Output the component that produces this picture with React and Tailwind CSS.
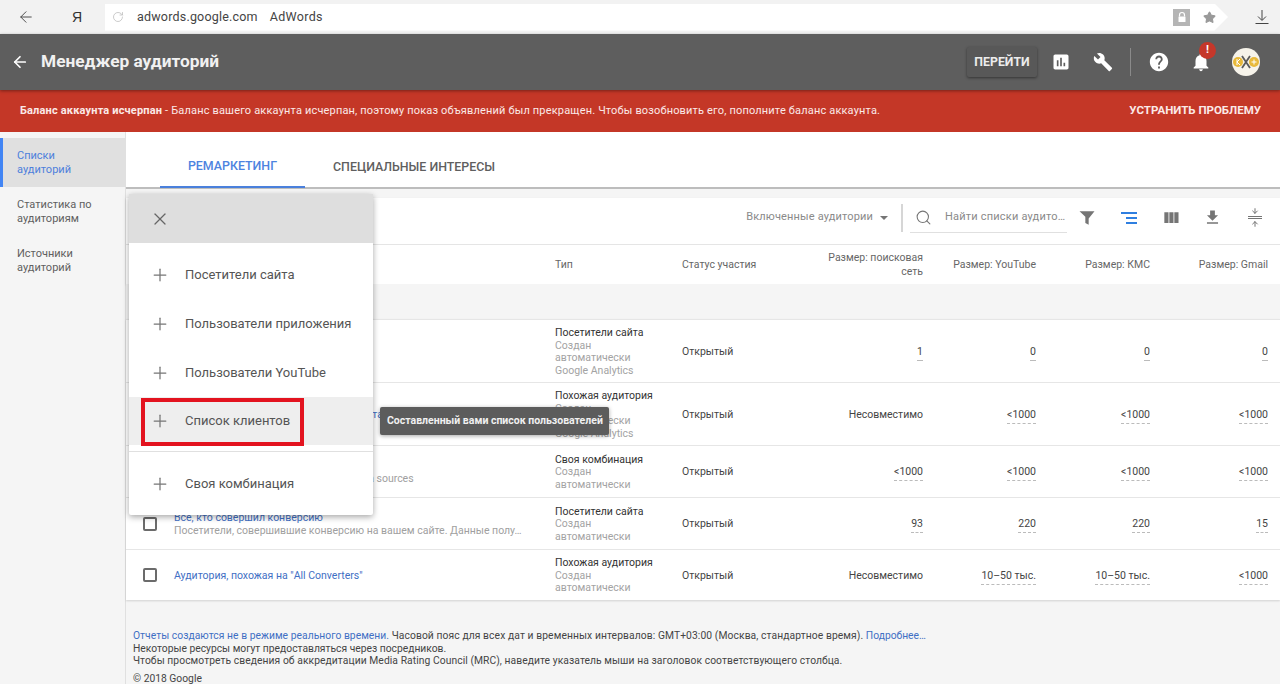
import { ArrowLeft, RotateCw, Star, Search, X, Plus, ArrowDown, ArrowUp } from 'lucide-react'

const P = {
  chart: 'M19 3H5c-1.1 0-2 .9-2 2v14c0 1.1.9 2 2 2h14c1.1 0 2-.9 2-2V5c0-1.1-.9-2-2-2zM9 17H7v-7h2v7zm4 0h-2V7h2v10zm4 0h-2v-4h2v4z',
  wrench: 'M22.7 19l-9.1-9.1c.9-2.3.4-5-1.5-6.9-2-2-5-2.4-7.4-1.3L9 6 6 9 1.6 4.7C.4 7.1.9 10.1 2.9 12.1c1.9 1.9 4.6 2.4 6.9 1.5l9.1 9.1c.4.4 1 .4 1.4 0l2.3-2.3c.5-.4.5-1.1.1-1.4z',
  help: 'M12 2C6.48 2 2 6.48 2 12s4.48 10 10 10 10-4.48 10-10S17.52 2 12 2zm1 17h-2v-2h2v2zm2.07-7.75l-.9.92C13.45 12.9 13 13.5 13 15h-2v-.5c0-1.1.45-2.1 1.17-2.83l1.24-1.26c.37-.36.59-.86.59-1.41 0-1.1-.9-2-2-2s-2 .9-2 2H8c0-2.21 1.79-4 4-4s4 1.79 4 4c0 .88-.36 1.68-.93 2.25z',
  bell: 'M12 22c1.1 0 2-.9 2-2h-4c0 1.1.89 2 2 2zm6-6v-5c0-3.07-1.64-5.64-4.5-6.32V4c0-.83-.67-1.5-1.5-1.5s-1.5.67-1.5 1.5v.68C7.63 5.36 6 7.92 6 11v5l-2 2v1h16v-1l-2-2z',
  filter: 'M3 4h18l-7 8.5V20l-4-2v-7.5z',
  columns: 'M10 18h5V5h-5v13zm-6 0h5V5H4v13zM16 5v13h5V5h-5z',
  download: 'M19 9h-4V3H9v6H5l7 7 7-7zM5 18v2h14v-2H5z',
}

function Mi({ d, className }) {
  return (
    <svg viewBox="0 0 24 24" className={className} fill="currentColor">
      <path d={d} />
    </svg>
  )
}

function Size({ v }) {
  if (v === 'Несовместимо') return <span>{v}</span>
  return <span className="border-b border-dashed border-[#bbb] pb-[2px]">{v}</span>
}

const rows = [
  { h: 'h-[63px]', name: 'Все посетители', desc: 'Посетители вашего сайта', type: 'Посетители сайта', sub: ['Создан', 'автоматически', 'Google Analytics'], sizes: ['1', '0', '0', '0'] },
  { h: 'h-[63px]', name: 'Аудитория, похожая на посетителей сайта и приложений', type: 'Похожая аудитория', sub: ['Создан', 'автоматически', 'Google Analytics'], sizes: ['Несовместимо', '<1000', '<1000', '<1000'] },
  { h: 'h-[52px]', name: 'Все пользователи', desc: 'Пользователи всех Google Analytics data sources', type: 'Своя комбинация', sub: ['Создан', 'автоматически'], sizes: ['<1000', '<1000', '<1000', '<1000'] },
  { h: 'h-[52px]', name: 'Все, кто совершил конверсию', desc: 'Посетители, совершившие конверсию на вашем сайте. Данные полу…', type: 'Посетители сайта', sub: ['Создан', 'автоматически'], sizes: ['93', '220', '220', '15'] },
  { h: 'h-[51px]', name: 'Аудитория, похожая на "All Converters"', type: 'Похожая аудитория', sub: ['Создан', 'автоматически'], sizes: ['Несовместимо', '10–50 тыс.', '10–50 тыс.', '<1000'] },
]

const cols = 'grid grid-cols-[48px_381px_127px_100px_141px_113px_114px_118px] pr-3'

const menu = [
  { label: 'Посетители сайта', h: 'h-[49px]' },
  { label: 'Пользователи приложения', h: 'h-[49px]' },
  { label: 'Пользователи YouTube', h: 'h-[49px]' },
]

function MenuItem({ label, h, className = '' }) {
  return (
    <div className={`flex items-center pl-[21px] ${h} ${className}`}>
      <Plus className="w-[20px] h-[20px] text-[#757575]" strokeWidth={1.5} />
      <span className="ml-[15px] text-[13px] text-[#555]">{label}</span>
    </div>
  )
}

export default function App() {
  return (
    <div className="relative w-[1280px] h-[684px] overflow-hidden bg-[#f5f5f5] font-['Roboto',sans-serif] text-[#212121]">
      {/* browser bar */}
      <div className="h-[34px] bg-[#f2f2f2] flex items-center">
        <ArrowLeft className="ml-[17px] w-[18px] h-[18px] text-[#444]" strokeWidth={1.25} />
        <span className="ml-[37px] w-[12px] text-[14px] text-[#333] font-['Liberation_Sans',sans-serif]">Я</span>
        <div className="ml-[21px] w-[1123px] h-[27px] bg-white flex items-center [clip-path:polygon(0_0,98.8%_0,100%_50%,98.8%_100%,0_100%)]">
          <RotateCw className="ml-[7px] w-[12px] h-[12px] text-[#bbb]" strokeWidth={1.5} />
          <span className="ml-[13px] text-[12.5px] text-[#444] tracking-[0.2px]">adwords.google.com</span>
          <span className="ml-[12px] text-[12.5px] text-[#444] tracking-[0.3px]">AdWords</span>
          <div className="ml-auto w-[17px] h-[17px] bg-[#b5b5b5] flex items-center justify-center">
            <svg viewBox="0 0 12 12" className="w-[12px] h-[12px]">
              <path d="M3.5 5.5V4a2.5 2.5 0 0 1 5 0v1.5" fill="none" stroke="#fff" strokeWidth="1.2" />
              <rect x="2.5" y="5.5" width="7" height="5.5" rx="0.5" fill="#fff" />
            </svg>
          </div>
          <Star className="ml-[13px] mr-[12px] w-[13px] h-[13px] text-[#9a9a9a]" fill="#9a9a9a" />
        </div>
        <svg viewBox="0 0 16 16" className="ml-[26px] w-[16px] h-[16px] text-[#444]" fill="none" stroke="currentColor" strokeWidth="1">
          <path d="M8 1v10M4 7.5L8 11.5l4-4M1.5 14.5h13" />
        </svg>
      </div>

      {/* app header */}
      <div className="h-[56px] bg-[#5e5e5e] flex items-center text-white shadow-[0_1px_3px_rgba(0,0,0,0.4)] relative">
        <ArrowLeft className="ml-[11px] w-[18px] h-[18px]" strokeWidth={2.25} />
        <span className="ml-[12px] text-[17.3px] font-bold text-[#f1f1f1]">Менеджер аудиторий</span>
        <div className="ml-auto mr-[14px] w-[70px] h-[30px] flex items-center justify-center bg-[#585858] rounded-[2px] shadow-[0_1px_3px_rgba(0,0,0,0.45)] text-[12.3px] font-bold text-[#ececec]">ПЕРЕЙТИ</div>
        <Mi d={P.chart} className="w-[20px] h-[20px] mr-[22px]" />
        <Mi d={P.wrench} className="w-[20px] h-[20px] mr-[17px]" />
        <div className="w-px h-[28px] bg-[#8a8a8a] mr-[17px]" />
        <Mi d={P.help} className="w-[22px] h-[22px] mr-[20px]" />
        <div className="relative w-[22px] h-[22px] mr-[20px]">
          <Mi d={P.bell} className="w-[22px] h-[22px]" />
          <div className="absolute -top-[9px] left-[9px] w-[17px] h-[17px] rounded-full bg-[#c5372a] text-[11px] font-bold flex items-center justify-center">!</div>
        </div>
        <svg viewBox="0 0 28 28" className="w-[28px] h-[28px] mr-[20px]">
          <circle cx="14" cy="14" r="14" fill="#f6f3ea" />
          <circle cx="6" cy="14" r="5" fill="#e8b93a" />
          <circle cx="22" cy="14" r="5" fill="#e8b93a" />
          <path d="M10 8l8 12M18 8l-8 12" stroke="#5a5a5a" strokeWidth="1.8" />
          <path d="M5 11v6M8 11l-3 3 3 3M22 11.5v5M19.5 14h5" stroke="#fff" strokeWidth="1" fill="none" />
        </svg>
      </div>

      {/* alert */}
      <div className="h-[42px] bg-[#c43727] flex items-center text-white text-[11px]">
        <span className="ml-[20px] text-[#fbe9e7] tracking-[0.17px]">
          <b>Баланс аккаунта исчерпан</b> - Баланс вашего аккаунта исчерпан, поэтому показ объявлений был прекращен. Чтобы возобновить его, пополните баланс аккаунта.
        </span>
        <span className="ml-auto mr-[19px] text-[11.5px] font-bold text-[#fbe9e7]">УСТРАНИТЬ ПРОБЛЕМУ</span>
      </div>

      <div className="flex h-[552px]">
        {/* sidebar */}
        <div className="w-[126px] shrink-0 pt-[6px] border-r border-[#e0e0e0] text-[11px] leading-[14px] text-[#5f5f5f]">
          <div className="h-[49px] bg-[#e0e0e0] border-l-[3px] border-[#4285f4] pl-[14px] flex items-center text-[#4d7fdc]">Списки<br />аудиторий</div>
          <div className="h-[49px] pl-[17px] flex items-center">Статистика по<br />аудиториям</div>
          <div className="h-[49px] pl-[17px] flex items-center">Источники<br />аудиторий</div>
        </div>

        <div className="flex-1 min-w-0">
          {/* tabs */}
          <div className="h-[57px] bg-white border-b-2 border-[#bdbdbd] flex pl-[34px] text-[12.4px] font-medium">
            <div className="w-[145px] h-[56px] border-b-2 border-[#4a80dc] text-[#4d83e0] flex items-center justify-center pt-[14px]">РЕМАРКЕТИНГ</div>
            <div className="ml-[28px] h-[56px] text-[#5f5f5f] flex items-center pt-[14px]">СПЕЦИАЛЬНЫЕ ИНТЕРЕСЫ</div>
          </div>

          {/* table card */}
          <div className="mt-[9px] bg-white shadow-[0_1px_2px_rgba(0,0,0,0.15)]">
            <div className="h-[47px] flex items-center justify-end border-b border-[#e5e5e5] text-[#8a8a8a] pb-[7px]">
              <span className="text-[11px] tracking-[0.15px]">Включенные аудитории</span>
              <div className="ml-[7px] w-0 h-0 border-x-[4px] border-x-transparent border-t-[4px] border-t-[#757575]" />
              <div className="ml-[13px] w-[2px] h-[28px] bg-[#d6d6d6]" />
              <div className="ml-[7px] w-[157px] h-[30px] border-b border-[#e0e0e0] flex items-center pl-[5px]">
                <Search className="w-[17px] h-[17px] text-[#757575]" strokeWidth={1.5} />
                <span className="ml-[13px] text-[11px] tracking-[0.2px] whitespace-nowrap">Найти списки аудито…</span>
              </div>
              <Mi d={P.filter} className="ml-[10px] w-[20px] h-[20px] text-[#757575]" />
              <div className="ml-[24px] w-[16px] flex flex-col items-end gap-[3px]">
                <div className="w-[16px] h-[2px] bg-[#2f7fe0]" />
                <div className="w-[11px] h-[2px] bg-[#2f7fe0]" />
                <div className="w-[11px] h-[2px] bg-[#2f7fe0]" />
              </div>
              <Mi d={P.columns} className="ml-[24px] w-[20px] h-[20px] text-[#757575]" />
              <Mi d={P.download} className="ml-[22px] w-[19px] h-[19px] text-[#757575]" />
              <div className="ml-[25px] mr-[18px] w-[15px] flex flex-col items-center text-[#757575]">
                <ArrowDown className="w-[8px] h-[8px]" strokeWidth={3} />
                <div className="w-[14px] h-px bg-[#757575] my-[1px]" />
                <div className="w-[14px] h-px bg-[#757575] mb-[1px]" />
                <ArrowUp className="w-[8px] h-[8px]" strokeWidth={3} />
              </div>
            </div>

            <div className={`${cols} h-[39px] items-center text-[10.5px] leading-[14px] text-[#666]`}>
              <div />
              <div />
              <div>Тип</div>
              <div>Статус участия</div>
              <div className="text-right pl-[40px]">Размер: поисковая сеть</div>
              <div className="text-right">Размер: YouTube</div>
              <div className="text-right">Размер: КМС</div>
              <div className="text-right">Размер: Gmail</div>
            </div>
          </div>

          <div className="h-[35px] bg-[#f5f5f5]" />

          <div className="bg-white shadow-[0_1px_2px_rgba(0,0,0,0.15)]">
            {rows.map((r) => (
              <div key={r.name} className={`${cols} ${r.h} items-center border-t border-[#e6e6e6] text-[10.5px] leading-[12.5px]`}>
                <div className="pl-[17px]">
                  <div className="w-[14px] h-[14px] border-2 border-[#6b6b6b] rounded-[2px]" />
                </div>
                <div className="min-w-0 whitespace-nowrap">
                  <div className="text-[#3f6fc4] leading-[13px]">{r.name}</div>
                  {r.desc && <div className="text-[#a0a0a0] leading-[13px]">{r.desc}</div>}
                </div>
                <div className="text-[#333] pt-[2px]">
                  {r.type}
                  {r.sub.map((s) => (
                    <div key={s} className="text-[#a3a3a3]">{s}</div>
                  ))}
                </div>
                <div className="text-[#444] pt-[2px]">Открытый</div>
                {r.sizes.map((s, i) => (
                  <div key={i} className="text-right text-[#444] pt-[2px]"><Size v={s} /></div>
                ))}
              </div>
            ))}
          </div>

          {/* footnote */}
          <div className="mt-[30px] pl-[7px] text-[10.3px] leading-[12.5px] text-[#444] whitespace-nowrap">
            <div><span className="text-[#3f6fc4] tracking-[0.04px]">Отчеты создаются не в режиме реального времени.</span> <span className="tracking-[0.09px]">Часовой пояс для всех дат и временных интервалов: GMT+03:00 (Москва, стандартное время).</span> <span className="text-[#3f6fc4]">Подробнее…</span></div>
            <div>Некоторые ресурсы могут предоставляться через посредников.</div>
            <div className="tracking-[0.07px]">Чтобы просмотреть сведения об аккредитации Media Rating Council (MRC), наведите указатель мыши на заголовок соответствующего столбца.</div>
            <div className="mt-[5px]">© 2018 Google</div>
          </div>
        </div>
      </div>

      {/* add-audience menu */}
      <div className="absolute left-[129px] top-[194px] w-[244px] h-[321px] bg-white rounded-[2px] shadow-[0_2px_6px_rgba(0,0,0,0.35)]">
        <div className="h-[49px] bg-[#dedede] flex items-center pl-[21px]">
          <X className="w-[20px] h-[20px] text-[#666]" strokeWidth={1.5} />
        </div>
        <div className="h-[7px]" />
        {menu.map((m) => (
          <MenuItem key={m.label} {...m} />
        ))}
        <MenuItem label="Список клиентов" h="h-[48px]" className="bg-[#eeeeee]" />
        <div className="h-[6px]" />
        <div className="border-t border-[#e0e0e0]" />
        <MenuItem label="Своя комбинация" h="h-[63px]" />
      </div>

      {/* highlight around the customer list item */}
      <div className="absolute left-[141px] top-[398px] w-[163px] h-[48px] border-[4px] border-[#e3131f]" />

      <div className="absolute left-[380px] top-[407px] w-[229px] h-[28px] bg-[#5c5c5c] rounded-[2px] shadow-[0_1px_4px_rgba(0,0,0,0.35)] flex items-center pl-[7px] text-[10.5px] font-bold text-[#f0f0f0] whitespace-nowrap">
        Составленный вами список пользователей
      </div>
    </div>
  )
}
